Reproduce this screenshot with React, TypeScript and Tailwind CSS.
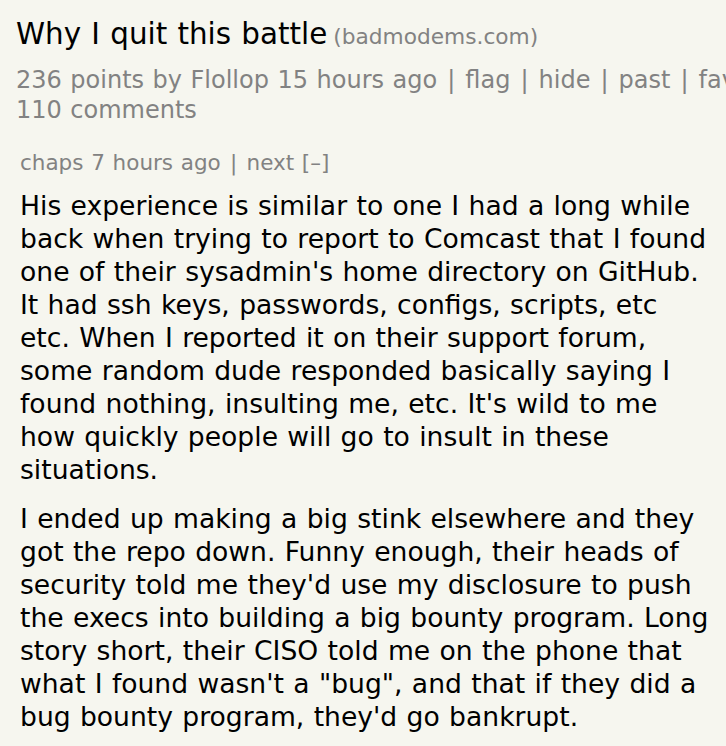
const paragraphOne = [
  "His experience is similar to one I had a long while",
  "back when trying to report to Comcast that I found",
  "one of their sysadmin's home directory on GitHub.",
  "It had ssh keys, passwords, configs, scripts, etc",
  "etc. When I reported it on their support forum,",
  "some random dude responded basically saying I",
  "found nothing, insulting me, etc. It's wild to me",
  "how quickly people will go to insult in these",
  "situations.",
];

const paragraphTwo = [
  "I ended up making a big stink elsewhere and they",
  "got the repo down. Funny enough, their heads of",
  "security told me they'd use my disclosure to push",
  "the execs into building a big bounty program. Long",
  "story short, their CISO told me on the phone that",
  'what I found wasn\'t a "bug", and that if they did a',
  "bug bounty program, they'd go bankrupt.",
];

const Sep = () => <span className="px-[1.5px]">|</span>;

export default function App() {
  return (
    <div className="min-h-screen w-full overflow-hidden bg-[#f6f6ef] font-['DejaVu_Sans',Verdana,sans-serif] [word-spacing:0.9px]">
      {/* story header */}
      <div className="pl-4 pt-[16px]">
        <div className="whitespace-nowrap leading-[36px]">
          <span className="text-[29.4px] text-black">Why I quit this battle</span>{" "}
          <span className="text-[21.7px] text-[#828282]">(badmodems.com)</span>
        </div>
        <div className="mt-[8px] whitespace-nowrap text-[24px] leading-[30px] text-[#828282]">
          <div>
            236 points by Flollop 15 hours ago <Sep /> flag <Sep /> hide <Sep /> past <Sep /> favorite <Sep />
          </div>
          <div>110 comments</div>
        </div>
      </div>

      {/* comment */}
      <div className="pl-5 pt-[25px]">
        <div className="whitespace-nowrap text-[21.5px] leading-[26px] text-[#828282]">
          chaps 7 hours ago <Sep /> next [–]
        </div>
        <div className="mt-[13px] whitespace-nowrap text-[26.6px] leading-[33px] text-black">
          <div>
            {paragraphOne.map((line) => (
              <div key={line}>{line}</div>
            ))}
          </div>
          <div className="mt-[16px]">
            {paragraphTwo.map((line) => (
              <div key={line}>{line}</div>
            ))}
          </div>
        </div>
      </div>
    </div>
  );
}
